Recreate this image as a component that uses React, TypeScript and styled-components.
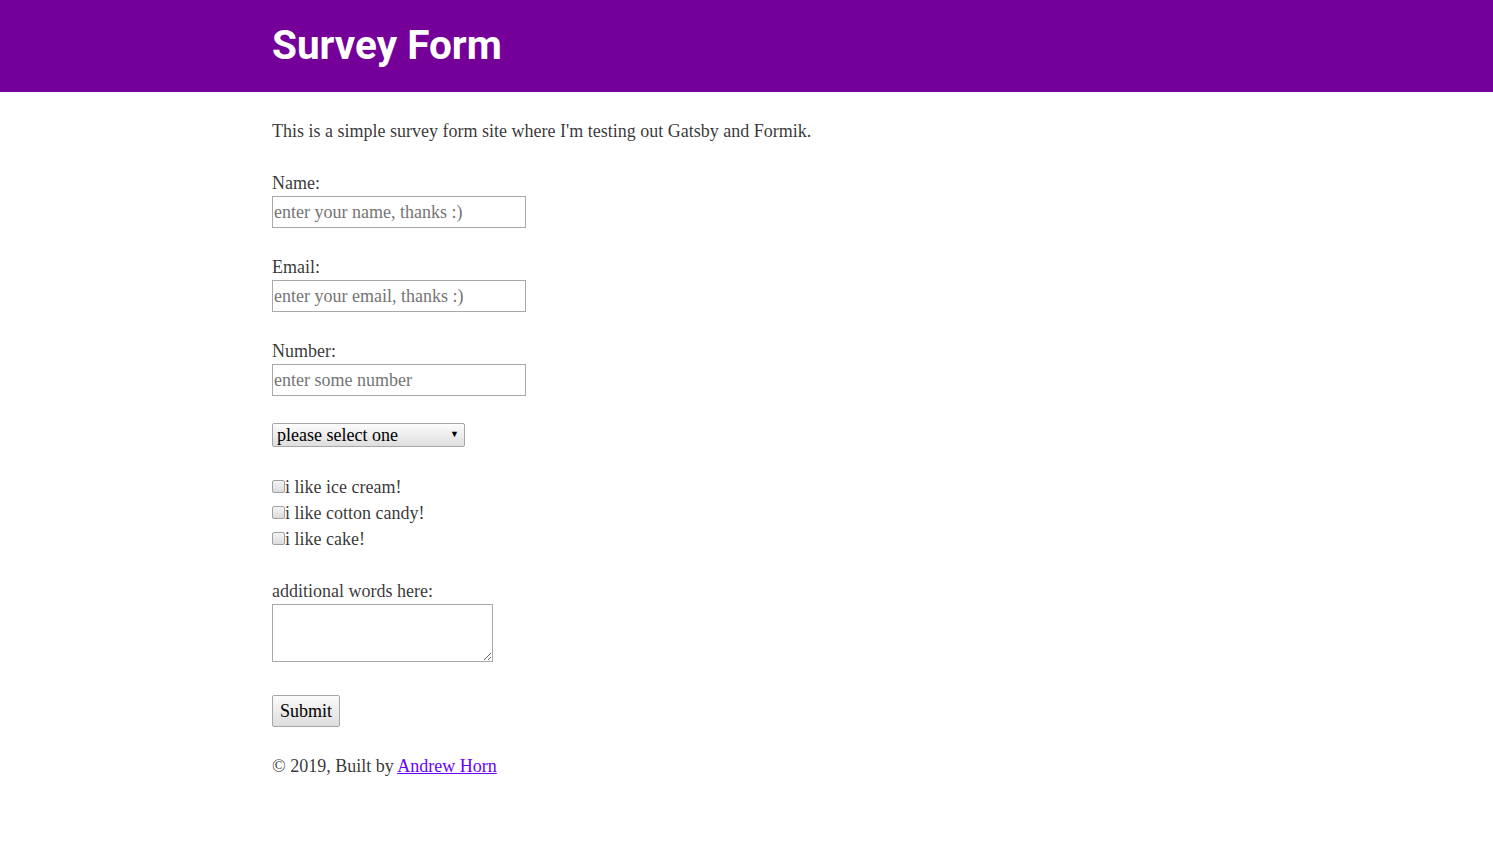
import React from "react";
import styled, { createGlobalStyle } from "styled-components";

const Global = createGlobalStyle`
  html { font-size: 18px; }
  body {
    margin: 0;
    background: #fff;
    color: hsla(0, 0%, 0%, 0.8);
    font-family: "Liberation Serif", "Times New Roman", serif;
    font-size: 18px;
    line-height: 26px;
  }
`;

const Header = styled.header`
  background: #740099;
  height: 92px;
  display: flex;
  align-items: center;
`;

const Container = styled.div`
  width: 949px;
  margin: 0 auto;
`;

const Title = styled.h1`
  margin: 0;
  padding-bottom: 3px;
  color: #fff;
  font-family: Roboto, "Liberation Sans", Arial, sans-serif;
  font-weight: 700;
  font-size: 40.5px;
  line-height: 44px;
`;

const Main = styled.main`
  width: 949px;
  margin: 0 auto;
  padding-top: 26px;
`;

const Intro = styled.p`
  margin: 0 0 26px;
`;

const Field = styled.div<{ $gap?: number }>`
  display: flex;
  flex-direction: column;
  align-items: flex-start;
  margin-bottom: ${(p) => p.$gap ?? 26}px;
`;

const Label = styled.label`
  display: block;
  height: 26px;
`;

const TextInput = styled.input`
  box-sizing: border-box;
  width: 254px;
  height: 32px;
  margin: 0;
  padding: 1px 1px;
  border: 1px solid #a9a9a9;
  border-radius: 0;
  font-family: "Liberation Serif", "Times New Roman", serif;
  font-size: 18px;
  color: #333;
  background: #fff;
  outline: none;
  &::placeholder { color: #757575; }
`;

const SelectWrap = styled.div`
  position: relative;
  width: 193px;
  height: 24px;
  margin-bottom: 27px;
  &::after {
    content: "▼";
    position: absolute;
    right: 6px;
    top: 8px;
    font-size: 9px;
    line-height: 9px;
    color: #000;
    pointer-events: none;
  }
`;

const Select = styled.select`
  appearance: none;
  -webkit-appearance: none;
  box-sizing: border-box;
  width: 193px;
  height: 24px;
  margin: 0;
  padding: 0 0 1px 4px;
  border: 1px solid #a6a6a6;
  border-radius: 2px;
  background: linear-gradient(#fcfcfc, #dedede);
  font-family: "Liberation Serif", "Times New Roman", serif;
  font-size: 18px;
  line-height: 22px;
  color: #000;
  outline: none;
`;

const Checks = styled.div`
  display: flex;
  flex-direction: column;
  margin-bottom: 27px;
`;

const CheckRow = styled.label`
  display: flex;
  align-items: center;
  box-sizing: border-box;
  height: 26px;
  padding-top: 2px;
`;

const Box = styled.input`
  appearance: none;
  -webkit-appearance: none;
  box-sizing: border-box;
  width: 13px;
  height: 13px;
  margin: 0;
  margin-top: -2px;
  border: 1px solid #a0a0a0;
  border-radius: 2px;
  background: linear-gradient(#f4f4f4, #dcdcdc);
`;

const TextArea = styled.textarea`
  box-sizing: border-box;
  width: 221px;
  height: 58px;
  margin: 0;
  border: 1px solid #a9a9a9;
  border-radius: 0;
  font-family: "Liberation Mono", monospace;
  font-size: 13px;
  outline: none;
`;

const SubmitButton = styled.button`
  box-sizing: border-box;
  width: 68px;
  height: 32px;
  margin: 0 0 26px;
  padding: 0;
  border: 1px solid #a6a6a6;
  border-radius: 2px;
  background: linear-gradient(#fbfbfb, #dddddd);
  font-family: "Liberation Serif", "Times New Roman", serif;
  font-size: 18px;
  color: #000;
`;

const Footer = styled.footer`
  margin: 0;
`;

const Link = styled.a`
  color: #6600ff;
  text-decoration: underline;
`;

export default function App() {
  return (
    <>
      <Global />
      <Header>
        <Container>
          <Title>Survey Form</Title>
        </Container>
      </Header>
      <Main>
        <Intro>This is a simple survey form site where I'm testing out Gatsby and Formik.</Intro>
        <form onSubmit={(e) => e.preventDefault()}>
          <Field>
            <Label htmlFor="name">Name:</Label>
            <TextInput id="name" type="text" placeholder="enter your name, thanks :)" />
          </Field>
          <Field>
            <Label htmlFor="email">Email:</Label>
            <TextInput id="email" type="email" placeholder="enter your email, thanks :)" />
          </Field>
          <Field $gap={26}>
            <Label htmlFor="number">Number:</Label>
            <TextInput id="number" type="text" placeholder="enter some number" />
          </Field>
          <SelectWrap>
            <Select defaultValue="">
              <option value="">please select one</option>
              <option value="a">option a</option>
              <option value="b">option b</option>
            </Select>
          </SelectWrap>
          <Checks>
            <CheckRow><Box type="checkbox" />i like ice cream!</CheckRow>
            <CheckRow><Box type="checkbox" />i like cotton candy!</CheckRow>
            <CheckRow><Box type="checkbox" />i like cake!</CheckRow>
          </Checks>
          <Field $gap={33}>
            <Label htmlFor="words">additional words here:</Label>
            <TextArea id="words" />
          </Field>
          <SubmitButton type="submit">Submit</SubmitButton>
        </form>
        <Footer>
          © 2019, Built by <Link href="#">Andrew Horn</Link>
        </Footer>
      </Main>
    </>
  );
}
